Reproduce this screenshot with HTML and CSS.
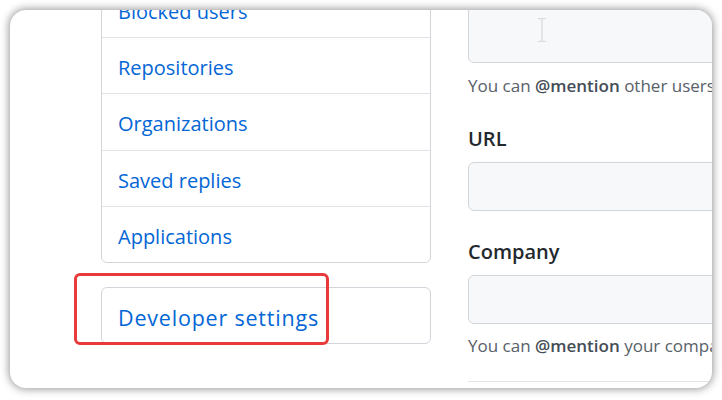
FILE: index.html
```html
<!DOCTYPE html>
<html>
<head>
<meta charset="utf-8">
<link rel="stylesheet" href="styles.css">
</head>
<body>
<div class="frame">
  <div class="page">
    <nav class="side">
      <div class="menu">
        <a class="item">Blocked users</a>
        <a class="item">Repositories</a>
        <a class="item">Organizations</a>
        <a class="item">Saved replies</a>
        <a class="item">Applications</a>
      </div>
      <div class="menu dev">
        <a class="item item-dev">Developer settings</a>
      </div>
    </nav>
    <div class="main">
      <div class="textarea">
        <svg class="ibeam" width="10" height="26" viewBox="0 0 10 26"><path d="M1 1.5h3l1 1 1-1h3M5 2.5v21M1 24.5h3l1-1 1 1h3" fill="none" stroke="#d6d8db" stroke-width="1.2"/></svg>
      </div>
      <p class="note">You can <b>@mention</b> other users and organizations to link to them.</p>
      <div class="group">
        <label class="label">URL</label>
        <div class="input"></div>
      </div>
      <div class="group">
        <label class="label">Company</label>
        <div class="input"></div>
        <p class="note note-low">You can <b>@mention</b> your company's GitHub organization to link it.</p>
      </div>
      <hr class="rule">
    </div>
  </div>
  <div class="highlight"></div>
</div>
</body>
</html>
```
FILE: styles.css
```css
html, body {
  margin: 0;
  padding: 0;
  background: #ffffff;
}
body {
  font-family: "Open Sans", "Noto Sans", sans-serif;
  color: #24292e;
}
.frame {
  position: relative;
  margin: 10px;
  width: 702px;
  height: 378px;
  overflow: hidden;
  border-radius: 16px;
  background: #ffffff;
  box-shadow: 0 0 8px 1px rgba(0, 0, 0, 0.42);
}
.page {
  display: flex;
  gap: 37px;
  padding-left: 91px;
  margin-top: -29px;
}
.side {
  flex: 0 0 330px;
  display: flex;
  flex-direction: column;
}
.menu {
  border: 1px solid #d1d5da;
  border-radius: 6px;
  display: flex;
  flex-direction: column;
}
.menu.dev {
  margin-top: 24px;
}
.item {
  display: block;
  padding: 14px 16px 10px;
  font-size: 20px;
  line-height: 31.2px;
  color: #0366d6;
  text-decoration: none;
  border-top: 1px solid #e1e4e8;
}
.item:first-child {
  border-top: none;
}
.item-dev {
  font-size: 21.5px;
  letter-spacing: 0.8px;
}
.main {
  flex: 0 0 400px;
}
.textarea {
  position: relative;
  box-sizing: border-box;
  height: 82px;
  border: 1px solid #d1d5da;
  border-radius: 6px;
  background: #f7f8fa;
}
.ibeam {
  position: absolute;
  left: 68px;
  top: 35px;
}
.note {
  margin: 9px 0 0;
  font-size: 17px;
  line-height: 27px;
  color: #586069;
  white-space: nowrap;
}
.note-low {
  margin-top: 8px;
}
.note b {
  font-weight: 600;
  color: #444d56;
}
.group {
  margin-top: 24px;
}
.group + .group {
  margin-top: 25px;
}
.label {
  display: block;
  font-size: 20px;
  font-weight: 600;
  line-height: 30px;
  padding-top: 1px;
  margin-bottom: 8px;
  color: #24292e;
}
.input {
  box-sizing: border-box;
  height: 49px;
  border: 1px solid #d1d5da;
  border-radius: 6px;
  background: #f7f8fa;
}
.rule {
  margin: 22px 0 0;
  border: 0;
  border-top: 1px solid #e1e4e8;
}
.highlight {
  position: absolute;
  left: 64px;
  top: 263px;
  width: 255px;
  height: 72px;
  box-sizing: border-box;
  border: 3px solid #e8393b;
  border-radius: 6px;
}
```
